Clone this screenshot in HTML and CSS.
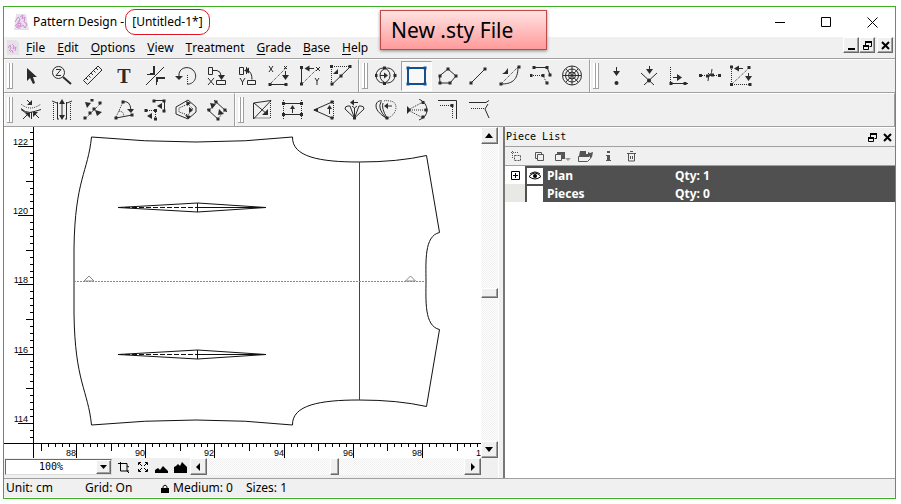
FILE: index.html
```html
<!DOCTYPE html>
<html lang="en">
<head>
  <meta charset="UTF-8">
  <title>Pattern Design - [Untitled-1*]</title>
  <link rel="stylesheet" href="styles.css">
</head>
<body>
<div class="window">
  <div class="callout">New .sty File</div>

  <header class="titlebar">
    <svg class="app-icon" width="16" height="16" viewBox="0 0 16 16"><path class="paper" d="M3 0h10l3 16H1z"/><path class="pink" d="M2 8l3-5 2 2-2 4-3 3M7 3l3-2-1 4 3-2-1 5 3 2-2 4-2-3-3 2 1-4-3 1 2-4M4 10v4l2-3v4"/></svg>
    <h1>Pattern Design - <span class="doc-name">[Untitled-1*]</span></h1>
    <div class="window-buttons">
      <button type="button" aria-label="Minimize"><svg width="11" height="11"><path d="M0 5.5h10"/></svg></button>
      <button type="button" aria-label="Maximize"><svg width="11" height="11"><path d="M.5 .5h9v9h-9z"/></svg></button>
      <button type="button" aria-label="Close"><svg width="11" height="11"><path d="M.5 .5l10 10M10.5 .5l-10 10"/></svg></button>
    </div>
  </header>

  <nav class="menubar">
    <svg class="doc-icon" width="12" height="15" viewBox="0 0 12 15"><path class="paper" d="M0 0h9l3 3v12H0z"/><path class="pink" d="M1 8l2-3 1 3-2 3M5 4l2 2-1 3 3-2-1 4M3 12l2-2 1 3"/></svg>
    <button type="button"><u>F</u>ile</button>
    <button type="button"><u>E</u>dit</button>
    <button type="button"><u>O</u>ptions</button>
    <button type="button"><u>V</u>iew</button>
    <button type="button"><u>T</u>reatment</button>
    <button type="button"><u>G</u>rade</button>
    <button type="button"><u>B</u>ase</button>
    <button type="button"><u>H</u>elp</button>
    <div class="mdi-buttons">
      <button type="button" class="raised" aria-label="Minimize document"><svg width="9" height="9"><path class="thick" d="M1 8h7"/></svg></button>
      <button type="button" class="raised" aria-label="Restore document"><svg width="9" height="9"><path class="thick" d="M2 1h6M0 5h6"/><path d="M2.5 1v3M8.5 0v5.5h-2M.5 4v4.5h5V4"/></svg></button>
      <button type="button" class="raised last" aria-label="Close document"><svg width="9" height="9"><path class="thick" d="M1 1l7 7M8 1l-7 7"/></svg></button>
    </div>
  </nav>

  <div class="toolbar-row">
    <div class="tool-group">
      <button type="button" aria-label="Select"><svg viewBox="0 0 22 22"><path class="fill" d="M7 3v13l3-3 3 6 2-1-2-6h4z"/></svg></button>
      <button type="button" aria-label="Zoom"><svg viewBox="0 0 22 22"><circle cx="7.5" cy="7.5" r="6"/><path d="M5 4.5h5l-5 6h5"/><path class="heavy" d="M12 12l8 7"/></svg></button>
      <button type="button" aria-label="Measure"><svg viewBox="0 0 22 22"><path d="M1.500 15.500l4 4L20 5l-4-4zM4 13l2 2M6.500 10.500l2 2M9 8l2 2M11.500 5.500l2 2M14 3l2 2"/></svg></button>
      <button type="button" aria-label="Text"><svg viewBox="0 0 22 22"><text class="glyph" x="11" y="18">T</text></svg></button>
      <button type="button" aria-label="Cut corner"><svg viewBox="0 0 22 22"><path d="M2 20L20 2M3 9.5h7M12.5 20v-8"/><path class="heavy" d="M6 9h4V1M13 17v-4h8"/></svg></button>
      <button type="button" aria-label="Rotate"><svg viewBox="0 0 22 22"><path d="M4 11C3 3 13 0 18 5c6 6 1 15-6 14"/><path class="fill" d="M0 11h8l-4 4z"/><path class="dots" d="M12.5 10v9"/></svg></button>
      <button type="button" aria-label="Mirror X"><svg viewBox="0 0 22 22"><path d="M2.5 2.5h4v7h-4zM10.5 15.5h9v4h-9zM7 5.5h4q4 1 4 5M2 13l6 7M8 13l-6 7"/><path class="fill" d="M12 10h7l-3.500 5z"/></svg></button>
      <button type="button" aria-label="Mirror Y"><svg viewBox="0 0 22 22"><path d="M2.5 2.5h4v7h-4zM10.5 15.5h8v4h-8zM8 5.5h3q4 2 4 9M3 13l2.500 4L8 13M5.5 17v3M9.5 2v7"/><path class="fill" d="M7 5.5l5-3v6z"/></svg></button>
      <button type="button" aria-label="Align X"><svg viewBox="0 0 22 22"><path d="M1 1l4 6M5 1L1 7M2 19.500h16M17.500 6v5M16 1l3 3M19 1l-3 3"/><path class="dots" d="M3 18L18 3"/><path class="fill" d="M14 10h7l-3.500 5z"/><path class="pts" d="M2 19.500h0M18 19.500h0"/></svg></button>
      <button type="button" aria-label="Align Y"><svg viewBox="0 0 22 22"><path d="M2.5 2v17M8 3.5h7M17 2l4 4M21 2l-4 4M16 13l2 3 2-3M18 16v4"/><path class="dots" d="M3 19L17 5"/><path class="fill" d="M5.500 3.500l5-3v6z"/><path class="pts" d="M2.5 2.5h0M2.5 19h0"/></svg></button>
      <button type="button" aria-label="Align diagonal"><svg viewBox="0 0 22 22"><path class="dots" d="M1.5 19V1.5H20"/><path d="M1.500 20L20 2"/><path class="fill" d="M8 4v5H3z"/><path class="pts" d="M1.5 1.5h0M20 1.5h0M11 11h0M2 19h0"/></svg></button>
    </div>
    <div class="tool-group">
      <button type="button" aria-label="Ellipse"><svg viewBox="0 0 22 22"><ellipse cx="8" cy="10.5" rx="7" ry="7.500"/><ellipse cx="12.5" cy="10.5" rx="7.500" ry="7.500"/><path d="M5 10.5h5"/><path class="fill" d="M9 7.500l4 3-4 3z"/><path class="pts" d="M9.500 3h0M9.500 18.500h0M1 10.500h0M20 10.500h0"/></svg></button>
      <button type="button" class="active" aria-label="Rectangle"><svg viewBox="0 0 22 22"><path class="heavy" d="M2 3h17v16H2z"/><path class="pts" d="M2 3h0M19 3h0M2 19h0M19 19h0"/></svg></button>
      <button type="button" aria-label="Polygon"><svg viewBox="0 0 22 22"><path d="M11 4l8 7-6 7H3l-.5-7z"/><path class="pts" d="M11 4h0M19 11h0M13 18h0M3 18h0M3 11h0"/></svg></button>
      <button type="button" aria-label="Line"><svg viewBox="0 0 22 22"><path d="M3 18L17 4"/><path class="pts" d="M3 18h0M17 4h0"/></svg></button>
      <button type="button" aria-label="Curve"><svg viewBox="0 0 22 22"><path class="dots" d="M2 19L19 2"/><path d="M2 19C12 19 19 16 19 2"/><path class="fill" d="M9 3v6H3l3-2z"/><path class="pts" d="M2 19h0M20 2h0"/></svg></button>
      <button type="button" aria-label="Parallel"><svg viewBox="0 0 22 22"><path d="M3 2.5h14l3 7"/><path class="dots" d="M1 10.5h12l4 8"/><path class="pts" d="M4 2.5h0M17 2.5h0M20 10h0M1 10.5h0M13 10.5h0M17 18h0"/></svg></button>
      <button type="button" aria-label="Concentric circles"><svg viewBox="0 0 22 22"><circle cx="11" cy="10.5" r="9.500"/><circle cx="11" cy="10.5" r="6.500"/><circle cx="11" cy="10.5" r="3.500"/><path d="M2 10.5h18M11 1v19M5 4l12 13M17 4L5 17"/></svg></button>
    </div>
    <div class="tool-group last">
      <button type="button" aria-label="Add point"><svg viewBox="0 0 22 22"><path d="M10.5 2v5"/><path class="fill" d="M7 6h7l-3.500 5z"/><circle class="fill" cx="10.5" cy="18" r="2"/></svg></button>
      <button type="button" aria-label="Intersection"><svg viewBox="0 0 22 22"><path d="M12.5 1v4M4 8l13 12M20 8L7 20"/><path class="fill" d="M9 4h7l-3.500 5z"/><circle class="fill" cx="12" cy="15.5" r="2"/></svg></button>
      <button type="button" aria-label="Offset point"><svg viewBox="0 0 22 22"><path class="dots" d="M2.5 2v16"/><path d="M2 18.5h18M5 12.5h5"/><path class="fill" d="M9 9l5 3.500L9 16z"/><path class="pts" d="M3 18.5h0M17 18.5h0"/></svg></button>
      <button type="button" aria-label="Divide"><svg viewBox="0 0 22 22"><path class="dots" d="M1 10.5h20"/><path d="M13 4q0 4-2 6t-2 6M9 8l3 3"/><path class="pts" d="M1.5 10.5h0M8.5 11h0M13.5 10h0M20.5 10.5h0"/></svg></button>
      <button type="button" aria-label="Move point"><svg viewBox="0 0 22 22"><path class="dots" d="M1.5 2v17.500H20M2 19L19 3"/><path d="M7 3.5h6M18.5 8v4"/><path class="fill" d="M4 3.500l5-3v6zM15 11h7l-3.500 5z"/><path class="pts" d="M1.5 2h0M19 2.5h0M1.5 19.5h0M20 19.5h0"/></svg></button>
    </div>
  </div>

  <div class="toolbar-row">
    <div class="tool-group">
      <button type="button" aria-label="Blend curves"><svg viewBox="0 0 22 22"><path class="dots" d="M1 5q9 8 20 0"/><path d="M1 9.500q4 4 9 4 5-1 11-3M1 10.500q4 4 9 4"/><path d="M7 1l4 4M3 20l6-6M19 19l-6-6M11.500 13v7"/><path class="fill" d="M12 1v5H7zM5 14h5v5zM13 13h5l-5 5z"/></svg></button>
      <button type="button" aria-label="Pleat"><svg viewBox="0 0 22 22"><path class="dots" d="M2.5 4v17M19.5 4v17"/><path d="M1 2l5 2M21 2l-5 2M6.5 3v17M15.5 3v17M11 3v15M6 20h2M14 20h2"/><path class="fill" d="M8 5h6l-3-5zM8 16h6l-3 5z"/></svg></button>
      <button type="button" aria-label="Split line"><svg viewBox="0 0 22 22"><path class="dots" d="M3 20L20 3"/><path class="fill" d="M3 3l6 1-4 5zM13 11l7 2-5 4z"/><path class="pts" d="M3 19h0M8 14h0M12 10h0M18 4h0M10 1h0"/></svg></button>
      <button type="button" aria-label="Angle"><svg viewBox="0 0 22 22"><path class="dots" d="M3 18l7-15M6 12q6 1 4 5"/><path d="M3 19l16-3M10 3q7-2 8 8"/><path class="fill" d="M14 10h7l-3 4z"/><path class="pts" d="M3 19h0M10 3h0M19 16h0"/></svg></button>
      <button type="button" aria-label="Move piece"><svg viewBox="0 0 22 22"><path d="M10 1.5h10.500V13"/><path class="dots" d="M1 11.5h10.500V21"/><path class="fill" d="M18 4v6l-5-3zM8 14v6l-5-3z"/><path class="pts" d="M10 2h0M20 2h0M20 12h0M2 11.5h0M11.500 11.5h0M11.500 20h0"/></svg></button>
      <button type="button" aria-label="Seam"><svg viewBox="0 0 22 22"><path d="M13 1l8 7v5l-8 7-12-5V8z"/><path class="dots" d="M13 5l5 5-5 6-9-3V9z"/><path class="fill" d="M11 2l5 2-4 3zM10 16l6 1-3 3zM14 8l4 3-4 3z"/></svg></button>
      <button type="button" aria-label="Join"><svg viewBox="0 0 22 22"><path d="M8 1l13 12M1 10l12 11"/><path class="dots" d="M10 3l-7 9M19 11l-7 9"/><path class="fill" d="M4 4l6 1-4 5zM13 10l5 5-6 1z"/><path class="pts" d="M10 3h0M19 11h0M3 11h0M12 20h0"/></svg></button>
    </div>
    <div class="tool-group last bordered">
      <button type="button" aria-label="Scale"><svg viewBox="0 0 22 22"><path d="M2.500 4L20 1.500 2.500 20zM3 4l13 11"/><path class="dots" d="M19.500 2v17H3"/><path class="fill" d="M17 10v6h-6z"/></svg></button>
      <button type="button" aria-label="Stretch"><svg viewBox="0 0 22 22"><path d="M0 4.5h21M0 15.5h21M10.5 9v5"/><path class="dots" d="M1.5 1v20M19.5 1v20"/><path class="fill" d="M8 10h5l-2.500-4z"/><path class="pts" d="M1.5 4.5h0M19.5 4.5h0M1.5 15.5h0M19.5 15.5h0"/></svg></button>
      <button type="button" aria-label="Dart"><svg viewBox="0 0 22 22"><path d="M19 3L1 11l18 8M16.5 9v6"/><path class="dots" d="M20.5 2v18"/><path class="fill" d="M14 10h5l-2.500-4zM0 11l5-2v4z"/><path class="pts" d="M19 3h0M19 19h0"/></svg></button>
      <button type="button" aria-label="Fan"><svg viewBox="0 0 22 22"><path d="M10.500 19L1 10q0-3 3-3h2l4.500 12V9M10.500 19V9L8 7M10.500 9L13 7M10.500 19L15 7h2q3 0 3 3l-9.500 9M8 3.5h6"/><path class="fill" d="M6 3.5l4-3v6z"/><path class="pts" d="M10.500 19h0"/></svg></button>
      <button type="button" aria-label="Fullness"><svg viewBox="0 0 22 22"><path d="M11 19Q0 12 1 6q1-5 6-4M11 19Q2 9 6 3M12 19Q6 9 8 4M11 7h6"/><path class="dots" d="M9 2q2-1 5 0 7 0 7 7-1 7-8 10"/><path class="fill" d="M9 7l4-3v6z"/><path class="pts" d="M12 19h0"/></svg></button>
      <button type="button" aria-label="Spread"><svg viewBox="0 0 22 22"><path class="dots" d="M17 3L2 11l15 8M2 11h18"/><path d="M13 0q8 4 8 11t-8 10"/><path class="fill" d="M1 7l4 4-4 4z"/><path class="pts" d="M17 3.5h0M20 11h0M17 18h0"/></svg></button>
      <button type="button" aria-label="Corner"><svg viewBox="0 0 22 22"><path d="M1 1.5h18.500V20"/><path class="dots" d="M3 6.5h12.500V19"/><path class="pts" d="M15 6.5h0"/></svg></button>
      <button type="button" aria-label="Corner curve"><svg viewBox="0 0 22 22"><path d="M1 3.5h17l3-2M20 5l-3 5 4 9"/><path class="dots" d="M3 9.5h14"/></svg></button>
    </div>
  </div>

  <main class="workspace">
    <section class="editor">
      <div class="sheet">
        <svg class="ruler-v" id="rulerV"></svg>
        <svg class="canvas">
          <g transform="translate(-34 -127)">
            <path d="M91.500 137Q200 147 292.500 137C292 157 320 162 359 162Q398 162 426.500 155.500L439.500 232.500C424 236 426 262 426 281S424 326 439.500 329.500L426.500 406.500Q398 400 359 400C320 400 292 405 292.500 425Q200 415 91.500 425C88 390 75 382 74 314V248C75 180 88 172 91.500 137z"/>
            <path class="inner" d="M359.500 162v238"/>
            <path class="grain" d="M74 281.500h352"/>
            <path class="mark" d="M84 281l5-5 5 5zM405.500 281l5-5 5 5z"/>
            <path d="M118 207.500l79.500-4.500 68.500 4.500-68.500 4.500zM197.500 203v9M197.500 207.500H266"/>
            <path class="dash" d="M118 207.500h80"/>
            <path d="M118 354.500l79.500-4.500 68.500 4.500-68.500 4.500zM197.500 350v9M197.500 354.500H266"/>
            <path class="dash" d="M118 354.500h80"/>
          </g>
        </svg>
        <div class="corner"></div>
        <svg class="ruler-h" id="rulerH"></svg>
      </div>
      <div class="scroll-v">
        <button type="button" class="raised" aria-label="Scroll up"><svg width="9" height="5"><path d="M0 5h8L4 0z"/></svg></button>
        <div class="track"><div class="thumb raised"></div></div>
        <button type="button" class="raised" aria-label="Scroll down"><svg width="9" height="5"><path d="M0 0h8L4 5z"/></svg></button>
      </div>
      <div class="bottom-bar">
        <div class="zoom-box">
          <select aria-label="Zoom level">
            <option>100%</option>
          </select>
          <span class="drop raised"><svg width="7" height="4"><path d="M0 0h7L3.500 4z"/></svg></span>
        </div>
        <button type="button" class="view-btn" aria-label="Fit piece"><svg width="12" height="12"><path class="ln" d="M0 2.5h9V10M2.5 1v9H11M9 5l2 1M9 10l2 2"/></svg></button>
        <button type="button" class="view-btn" aria-label="Fit all"><svg width="12" height="12"><path class="ln" d="M1.500 4V1.500H4M8 1.500h2.500V4M1.500 8v2.500H4M8 10.500h2.500V8M2 2l3 3M10 2L7 5M2 10l3-3M10 10L7 7"/></svg></button>
        <button type="button" class="view-btn" aria-label="Zoom out"><svg width="13" height="12"><path d="M0 12V9l3-2 2 2 3-4 3 3 2 2v2z"/></svg></button>
        <button type="button" class="view-btn" aria-label="Zoom in"><svg width="13" height="12"><path d="M0 12V6l2-1 2-2 2 2 2-4 3 3 2 2v6z"/></svg></button>
        <button type="button" class="raised" aria-label="Scroll left"><svg width="5" height="8"><path d="M4 0v8L0 4z"/></svg></button>
        <div class="track"><div class="thumb raised"></div></div>
        <button type="button" class="raised" aria-label="Scroll right"><svg width="5" height="8"><path d="M1 0v8l4-4z"/></svg></button>
      </div>
    </section>

    <div class="splitter"></div>

    <aside class="pieces">
      <div class="pieces-head">
        <h2>Piece List</h2>
        <button type="button" aria-label="Float panel"><svg width="9" height="9"><path class="thick" d="M2 1h6M0 5h6"/><path d="M2.5 1v3M8.5 0v5.5h-2M.5 4v4.5h5V4"/></svg></button>
        <button type="button" aria-label="Close panel"><svg width="9" height="9"><path class="thick" d="M1 1l7 7M8 1l-7 7"/></svg></button>
      </div>
      <div class="pieces-tools">
        <button type="button" aria-label="New piece"><svg width="11" height="11"><path stroke-dasharray="1 1" d="M0 1.5h8M1.5 0v8"/><path stroke-dasharray="2 1" d="M3.5 4.5h6v5h-6z"/></svg></button>
        <button type="button" aria-label="Copy piece"><svg width="11" height="11"><path d="M1.5 7.5v-6h6M3.5 3.5h6v6h-6zM1.5 7.5h2M7.5 1.5v2"/></svg></button>
        <button type="button" aria-label="Paste piece"><svg width="17" height="11"><path d="M1.5 3.5h6v6h-6z"/><path class="solid" d="M3 1h8v7H8V3H3z"/><path class="light" d="M11 7h6l-3 3z"/></svg></button>
        <button type="button" aria-label="Open folder"><svg width="17" height="11"><path d="M1.5 10.5V5.5h11M1.5 10.5h9l3-3"/><path class="solid" d="M3 0h6v3h2V1l2 1 3-1-1 5-2 2V5H2z"/></svg></button>
        <button type="button" aria-label="Piece info"><svg width="11" height="11"><path class="solid" d="M4 0h3v2H4zM3 4h4v5h1v1H3V9h1V5H3z"/></svg></button>
        <button type="button" aria-label="Delete piece"><svg width="11" height="11"><path d="M1 2.5h9M4 .5h3M2.500 3v7h6V3M4.500 5v3M6.500 5v3"/></svg></button>
      </div>
      <table>
        <tr>
          <td class="expander"><button type="button" aria-label="Expand"><svg width="9" height="9"><path d="M.5 .5h8v8h-8zM2 4.5h5M4.5 2v5"/></svg></button></td>
          <td class="eye"><span><svg width="14" height="10" viewBox="0 0 14 10"><path d="M1 5.500q6-7 12 0-6 5-12 0M2 3q5-4 10 0"/><circle cx="7" cy="5" r="2"/></svg></span></td>
          <td class="name">Plan</td>
          <td>Qty: 1</td>
        </tr>
        <tr>
          <td class="expander"></td>
          <td class="eye"><span></span></td>
          <td class="name">Pieces</td>
          <td>Qty: 0</td>
        </tr>
      </table>
    </aside>
  </main>

  <footer class="statusbar">
    <span class="unit">Unit: cm</span>
    <span class="grid-state">Grid: On</span>
    <span class="size"><svg width="8" height="9"><path class="shackle" d="M2 4V2.500Q4-.5 6 2.500V4"/><path d="M0 4h8v5H0z"/></svg> Medium: 0</span>
    <span>Sizes: 1</span>
  </footer>
</div>

<script type="text/javascript">
  var SVG = 'http://www.w3.org/2000/svg';
  var CM = 34.6;   // pixels per centimetre at 100%

  function add(parent, name, attrs, text) {
    var el = document.createElementNS(SVG, name);
    for (var key in attrs) {
      el.setAttribute(key, attrs[key]);
    }
    if (text) {
      el.textContent = text;
    }
    parent.appendChild(el);
  }

  // five ticks per centimetre, a number on every second centimetre
  function drawRuler(svg, vertical, first, start, step) {
    var box = svg.getBoundingClientRect();
    var max = vertical ? box.height : box.width + 12;
    var d = '';
    svg.textContent = '';
    for (var i = -5; ; i++) {
      var pos = Math.round(start + i * CM / 5);
      if (pos > max) {
        break;
      }
      var len = i % 10 === 0 ? 15 : (i % 5 === 0 ? 7 : 3);
      if (vertical) {
        d += 'M29 ' + (pos + 0.5) + 'h-' + len;
      } else {
        d += 'M' + (pos + 0.5) + ' 0v' + len;
      }
      if (i % 10 === 0) {
        var label = String(first + step * i / 5);
        if (vertical) {
          add(svg, 'text', { x: 24, y: pos - 1 }, label);
        } else {
          add(svg, 'text', { x: pos, y: 12 }, label);
        }
      }
    }
    add(svg, 'path', { d: d });
  }

  function drawRulers() {
    drawRuler(document.getElementById('rulerV'), true, 122, 19, -1);
    drawRuler(document.getElementById('rulerH'), false, 88, 42, 1);
  }

  drawRulers();
  window.onresize = drawRulers;
</script>
</body>
</html>
```
FILE: styles.css
```css
*,
*::before {
  box-sizing: border-box;
}
body {
  margin: 0;
  min-height: 100vh;
  display: flex;
  padding: 6px 5px 5px 3px;
  background: #fff;
  color: #000;
  font: 12px/18px "Noto Sans", sans-serif;
}
button {
  display: flex;
  align-items: center;
  justify-content: center;
  margin: 0;
  padding: 0;
  border: 0;
  background: none;
  color: inherit;
  font: inherit;
}
h1, h2 {
  margin: 0;
  font-size: 12px;
  font-weight: normal;
}
svg {
  display: block;
  flex: none;
}
.window {
  position: relative;
  flex: 1;
  min-width: 0;
  display: flex;
  flex-direction: column;
  border: 1px solid #3faf23;
  background: #f0f0f0;
}

/* 3D look of the old style buttons */
.raised {
  border: 1px solid;
  border-color: #fff #696969 #696969 #fff;
  box-shadow: inset -1px -1px #a0a0a0;
  background: #f0f0f0;
}

/* note over the title bar */
.callout {
  position: absolute;
  left: 376px;
  top: 3px;
  width: 167px;
  height: 40px;
  padding-left: 10px;
  border: 1px solid #be4b48;
  background: linear-gradient(#ffe2e2, #ff9b9b);
  box-shadow: 0 1px 3px #888;
  font-size: 21px;
  line-height: 38px;
  white-space: nowrap;
}

/* title bar */
.titlebar {
  display: flex;
  align-items: center;
  height: 30px;
  padding-left: 9px;
  background: #fff;
}
.titlebar h1 {
  margin-left: 4px;
  white-space: nowrap;
}
.doc-name {
  display: inline-block;
  margin-left: -2px;
  padding: 3px 6px;
  border: 1px solid #e81123;
  border-radius: 10px;
}
.paper {
  fill: #e4e2e6;
}
.pink {
  fill: none;
  stroke: #d68ad8;
}
.window-buttons {
  display: flex;
  margin-left: auto;
}
.window-buttons button {
  width: 46px;
  height: 30px;
}
.window-buttons path {
  fill: none;
  stroke: #000;
}

/* menu */
.menubar {
  display: flex;
  align-items: center;
  gap: 12px;
  height: 22px;
  padding-left: 3px;
  border-bottom: 1px solid #a0a0a0;
}
.doc-icon {
  margin-right: -5px;
}
.menubar u {
  text-underline-offset: 2px;
}
.mdi-buttons {
  display: flex;
  align-self: flex-start;
  margin-left: auto;
  padding-right: 2px;
}
.mdi-buttons button {
  width: 16px;
  height: 16px;
}
.mdi-buttons .last {
  margin-left: 2px;
}
.mdi-buttons path,
.pieces-head path {
  fill: none;
  stroke: #000;
}
.mdi-buttons .thick,
.pieces-head .thick {
  stroke-width: 2;
}

/* tool bars */
.toolbar-row {
  display: flex;
  height: 34px;
  border-bottom: 1px solid #a0a0a0;
}
.tool-group {
  display: flex;
  align-items: center;
  padding-right: 2px;
  border-top: 1px solid #fff;
  border-right: 1px solid #a0a0a0;
  box-shadow: inset 1px 0 #fff;
}
.tool-group.last {
  flex: 1;
  border-right: 0;
}
.tool-group.bordered {
  border-right: 1px solid #a0a0a0;
}
.tool-group::before {
  content: "";
  width: 6px;
  height: 26px;
  margin: 0 2px 0 3px;
  border: solid #a0a0a0;
  border-width: 0 1px 1px 0;
  background: linear-gradient(90deg, #fff 2px, #a0a0a0 2px, #a0a0a0 3px, #fff 3px);
}
.tool-group button {
  width: 31px;
  height: 30px;
}
.tool-group svg {
  width: 22px;
  height: 22px;
  fill: none;
  stroke: #2b2b2b;
}
.tool-group .fill {
  fill: #2b2b2b;
  stroke: none;
}
.tool-group .heavy {
  stroke-width: 2;
}
.tool-group .dots {
  stroke-dasharray: 1 1;
}
.tool-group .pts {
  stroke-width: 3;
  stroke-linecap: square;
}
.tool-group .glyph {
  fill: #2b2b2b;
  stroke: none;
  font: bold 20px "Liberation Serif", serif;
  text-anchor: middle;
}
.tool-group .active {
  border: 1px solid;
  border-color: #a0a0a0 #fff #fff #a0a0a0;
  background: #f8f8f8;
}
.tool-group .active svg {
  stroke: #14508c;
}

/* drawing area */
.workspace {
  flex: 1;
  display: grid;
  grid-template-columns: minmax(0, 19fr) 7px minmax(0, 15fr);
  min-height: 351px;
}
.editor {
  display: grid;
  grid-template-columns: minmax(0, 1fr) 17px;
  grid-template-rows: minmax(0, 1fr) 17px;
  padding-bottom: 3px;
}
.sheet {
  display: grid;
  grid-template-columns: 30px minmax(0, 1fr);
  grid-template-rows: minmax(0, 1fr) 14px;
  background: #fff;
}
.ruler-v,
.canvas,
.ruler-h {
  width: 100%;
  height: 100%;
  overflow: hidden;
}
.ruler-v,
.corner {
  border-right: 1px solid #000;
}
.ruler-v,
.canvas {
  border-bottom: 1px solid #000;
}
.ruler-v path,
.ruler-h path {
  stroke: #000;
}
.sheet text {
  font: 9px "Liberation Sans", sans-serif;
  text-anchor: end;
}
.canvas {
  fill: none;
  stroke: #111;
}
.canvas .inner {
  stroke: #444;
}
.canvas .grain {
  stroke: #888;
  stroke-dasharray: 2 1;
}
.canvas .mark {
  stroke: #888;
}
.canvas .dash {
  stroke-dasharray: 5 2;
}

/* scroll bars */
.track {
  flex: 1;
  background: repeating-conic-gradient(#f0f0f0 0 25%, #fff 0 50%) 0 0 / 2px 2px;
}
.scroll-v {
  display: flex;
  flex-direction: column;
}
.scroll-v button,
.bottom-bar .raised {
  width: 17px;
  height: 17px;
}
.scroll-v .track {
  display: grid;
  grid-template-rows: 48fr 10px 48fr;
}
.scroll-v .thumb {
  grid-row: 2;
  height: 10px;
}
.bottom-bar {
  display: flex;
  align-items: center;
}
.bottom-bar .track {
  height: 17px;
}
.bottom-bar .thumb {
  width: 9px;
  margin-left: 48%;
}
.zoom-box {
  position: relative;
  width: 107px;
  margin: 0 2px 0 1px;
}
.zoom-box select {
  display: block;
  width: 100%;
  height: 16px;
  padding: 0 0 0 33px;
  border: 1px solid;
  border-color: #696969 #ddd #ddd #696969;
  border-radius: 0;
  background: #fff;
  color: #000;
  font: 10px "DejaVu Sans Mono", monospace;
  appearance: none;
}
.bottom-bar .drop {
  position: absolute;
  right: 1px;
  top: 1px;
  display: flex;
  align-items: center;
  justify-content: center;
  width: 15px;
  height: 14px;
  pointer-events: none;
}
.view-btn {
  width: 19px;
  height: 17px;
}
.bottom-bar .ln {
  fill: none;
  stroke: #000;
}
.splitter {
  border-left: 1px solid #fff;
  border-right: 2px solid #777;
}

/* piece list */
.pieces {
  background: #fff;
}
.pieces-head {
  display: flex;
  align-items: center;
  height: 20px;
  padding-left: 1px;
  border-top: 1px solid #fff;
  border-bottom: 1px solid #a0a0a0;
  background: #f0f0f0;
}
.pieces-head h2 {
  flex: 1;
  font: 10px/18px "DejaVu Sans Mono", monospace;
}
.pieces-head button {
  width: 15px;
  height: 15px;
}
.pieces-tools {
  display: flex;
  height: 19px;
  border-bottom: 1px solid #a0a0a0;
  background: #f0f0f0;
}
.pieces-tools button {
  width: 23px;
}
.pieces-tools path {
  fill: none;
  stroke: #555;
}
.pieces-tools .solid {
  fill: #555;
  stroke: none;
}
.pieces-tools .light {
  fill: #999;
  stroke: none;
}
.pieces table {
  width: 100%;
  border-collapse: collapse;
  table-layout: fixed;
}
.pieces tr {
  background: #505050;
  color: #fff;
  font-weight: bold;
}
.pieces td {
  height: 18px;
  padding: 1px 0 0;
  line-height: 17px;
}
.pieces .expander {
  width: 20px;
  background: #fff;
}
.expander button {
  width: 20px;
}
.expander path {
  fill: none;
  stroke: #000;
}
.pieces tr + tr .expander {
  background: #e8e8e5;
}
.pieces .eye {
  width: 22px;
}
.eye span {
  display: flex;
  align-items: center;
  justify-content: center;
  width: 16px;
  height: 16px;
  margin-left: 2px;
  background: #fff;
}
.eye path {
  fill: none;
  stroke: #000;
}
.pieces .name {
  width: 128px;
}

/* status bar */
.statusbar {
  display: flex;
  height: 20px;
  padding-left: 2px;
  border-top: 1px solid #a0a0a0;
  border-bottom: 1px solid #fff;
}
.statusbar .unit {
  width: 79px;
}
.statusbar .grid-state {
  width: 76px;
}
.statusbar .size {
  display: flex;
  align-items: center;
  gap: 4px;
  width: 85px;
}
.statusbar .shackle {
  fill: none;
  stroke: #000;
}
```
